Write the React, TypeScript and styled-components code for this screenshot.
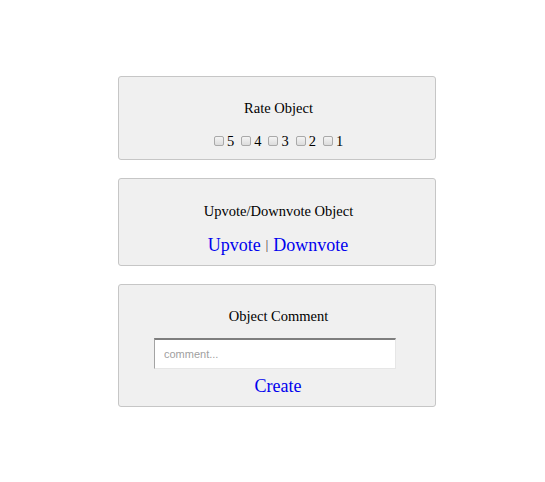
import React from "react";
import styled, { createGlobalStyle } from "styled-components";

const Global = createGlobalStyle`
  html, body { margin: 0; padding: 0; background: #ffffff; }
  body { font-family: "Liberation Serif", "Times New Roman", serif; color: #000; }
`;

const Page = styled.div`
  display: flex;
  flex-direction: column;
  gap: 18px;
  padding: 76px 0 0 118px;
`;

const Card = styled.section<{ $pt: number; $gap: number; $pb: number }>`
  box-sizing: border-box;
  width: 318px;
  display: flex;
  flex-direction: column;
  align-items: center;
  gap: ${(p) => p.$gap}px;
  padding: ${(p) => p.$pt}px 0 ${(p) => p.$pb}px;
  background: #f0f0f0;
  border: 1px solid #c6c6c6;
  border-radius: 3px;
`;

const Title = styled.div`
  font-size: 14.5px;
  line-height: 16px;
  padding-left: 3px;
`;

const RatingRow = styled.div`
  display: flex;
  align-items: center;
  gap: 7px;
  font-size: 14.5px;
  line-height: 18px;
  padding-left: 3px;
`;

const RatingItem = styled.label`
  display: flex;
  align-items: center;
  gap: 3px;
`;

const Box = styled.input`
  margin: 0;
  width: 10px;
  height: 10px;
  appearance: none;
  box-sizing: border-box;
  border: 1px solid #a9a9a9;
  border-radius: 2px;
  background: linear-gradient(#f4f4f4, #dcdcdc);
`;

const LinkRow = styled.div<{ $mt?: number }>`
  display: flex;
  align-items: center;
  gap: 5px;
  line-height: 21px;
  padding-left: 2px;
  margin-top: ${(p) => p.$mt ?? 0}px;
`;

const Link = styled.a`
  font-size: 18px;
  color: #0000ee;
  text-decoration: none;
  cursor: pointer;
`;

const Sep = styled.span`
  font-size: 12px;
  color: #2a0a2a;
`;

const Input = styled.input`
  box-sizing: border-box;
  width: 242px;
  height: 31px;
  margin-right: 4px;
  padding: 0 9px;
  background: #fff;
  border: 1px solid #e6e6e6;
  border-top: 2px solid #7e7e7e;
  border-left: 1px solid #a3a3a3;
  font-family: "Liberation Sans", Arial, sans-serif;
  font-size: 11px;
  outline: none;
  &::placeholder { color: #a0a0a0; }
`;

export default function App() {
  const ratings = [5, 4, 3, 2, 1];
  return (
    <>
      <Global />
      <Page>
        <Card $pt={23} $gap={16} $pb={9}>
          <Title>Rate Object</Title>
          <RatingRow>
            {ratings.map((r) => (
              <RatingItem key={r}>
                <Box type="checkbox" />
                {r}
              </RatingItem>
            ))}
          </RatingRow>
        </Card>
        <Card $pt={24} $gap={16} $pb={9}>
          <Title>Upvote/Downvote Object</Title>
          <LinkRow>
            <Link>Upvote</Link>
            <Sep>|</Sep>
            <Link>Downvote</Link>
          </LinkRow>
        </Card>
        <Card $pt={23} $gap={14} $pb={9}>
          <Title>Object Comment</Title>
          <Input placeholder="comment..." />
          <LinkRow $mt={-7}>
            <Link>Create</Link>
          </LinkRow>
        </Card>
      </Page>
    </>
  );
}
